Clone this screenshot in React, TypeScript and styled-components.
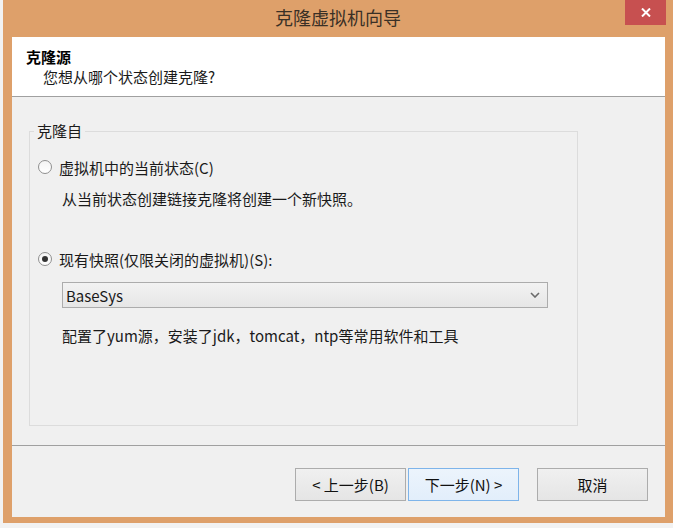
import styled, { createGlobalStyle } from 'styled-components'

const GlobalStyle = createGlobalStyle`
  html, body {
    margin: 0;
    height: 100%;
    overflow: hidden;
    background: #f2f2f2;
    font-family: "Noto Sans CJK SC", "Noto Sans", sans-serif;
    color: #1a1a1a;
  }
`

const Page = styled.div`
  padding-left: 3px;
`

const Window = styled.div`
  width: 670px;
  height: 523px;
  box-sizing: border-box;
  background: #dea06a;
  display: flex;
  flex-direction: column;
  padding-bottom: 6px;
`

const TitleBar = styled.div`
  height: 37px;
  flex-shrink: 0;
  display: grid;
  grid-template-columns: 1fr auto 1fr;
  padding: 0 7px;
`

const Title = styled.div`
  grid-column: 2;
  font-size: 18px;
  line-height: 34px;
  color: #3a3026;
`

const CloseButton = styled.div`
  grid-column: 3;
  justify-self: end;
  width: 41px;
  height: 25px;
  background: #c75050;
  display: flex;
  align-items: center;
  justify-content: center;
`

const Client = styled.div`
  flex: 1;
  margin: 0 8px 0 9px;
  background: #f0f0f0;
  display: flex;
  flex-direction: column;
`

const Header = styled.div`
  height: 60px;
  box-sizing: border-box;
  background: #ffffff;
  border-bottom: 1px solid #a0a0a0;
  padding: 10px 0 0 14px;
`

const HeaderTitle = styled.div`
  font-size: 15px;
  line-height: 20px;
  font-weight: bold;
  color: #000;
`

const HeaderSub = styled.div`
  font-size: 15px;
  line-height: 20px;
  margin-left: 17px;
  color: #1a1a1a;
`

const Body = styled.div`
  flex: 1;
  padding: 24px 0 0 17px;
`

const Group = styled.fieldset`
  margin: 0;
  width: 549px;
  height: 305px;
  box-sizing: border-box;
  border: 1px solid #dcdcdc;
  padding: 0 0 0 8px;
  display: flex;
  flex-direction: column;
  align-items: flex-start;
`

const Legend = styled.legend`
  font-size: 15px;
  line-height: 20px;
  padding: 0 3px;
  margin-left: -4px;
`

const Option = styled.label<{ $top: number }>`
  display: flex;
  align-items: center;
  gap: 7px;
  height: 20px;
  margin-top: ${(p) => p.$top}px;
  font-size: 15px;
`

const Radio = styled.input.attrs({ type: 'radio' })`
  appearance: none;
  margin: 0;
  width: 14px;
  height: 14px;
  border-radius: 50%;
  border: 1px solid #8f8f8f;
  background: linear-gradient(#f4f4f4, #ffffff);
  display: grid;
  place-items: center;
  box-sizing: border-box;

  &:checked::after {
    content: '';
    width: 6px;
    height: 6px;
    border-radius: 50%;
    background: #333;
  }
`

const Note = styled.div<{ $top: number }>`
  margin: ${(p) => p.$top}px 0 0 24px;
  font-size: 15px;
  line-height: 20px;
`

const Select = styled.div`
  margin: 13px 0 0 24px;
  width: 486px;
  height: 26px;
  box-sizing: border-box;
  border: 1px solid #acacac;
  background: linear-gradient(#f2f2f2, #e6e6e6);
  display: flex;
  align-items: center;
  justify-content: space-between;
  padding: 0 7px 0 3px;
  font-size: 15px;
`

const Footer = styled.div`
  height: 72px;
  box-sizing: border-box;
  border-top: 1px solid #a0a0a0;
  display: flex;
  justify-content: flex-end;
  align-items: flex-start;
  padding: 22px 17px 0 0;
`

const Button = styled.div<{ $focused?: boolean; $gap: number }>`
  width: 111px;
  height: 33px;
  box-sizing: border-box;
  margin-left: ${(p) => p.$gap}px;
  border: 1px solid ${(p) => (p.$focused ? '#7eb4ea' : '#acacac')};
  background: ${(p) =>
    p.$focused ? 'linear-gradient(#ecf4fc, #e2eefb)' : 'linear-gradient(#f0f0f0, #e5e5e5)'};
  display: flex;
  align-items: center;
  justify-content: center;
  font-size: 15px;
  color: #111;
`

function App() {
  return (
    <Page>
      <GlobalStyle />
      <Window>
        <TitleBar>
          <Title>克隆虚拟机向导</Title>
          <CloseButton>
            <svg width="10" height="9" viewBox="0 0 10 9">
              <path d="M1 0.5 L9 8.5 M9 0.5 L1 8.5" stroke="#fff" strokeWidth="2" />
            </svg>
          </CloseButton>
        </TitleBar>
        <Client>
          <Header>
            <HeaderTitle>克隆源</HeaderTitle>
            <HeaderSub>您想从哪个状态创建克隆?</HeaderSub>
          </Header>
          <Body>
            <Group>
              <Legend>克隆自</Legend>
              <Option $top={16}>
                <Radio name="src" readOnly />
                虚拟机中的当前状态(C)
              </Option>
              <Note $top={12}>从当前状态创建链接克隆将创建一个新快照。</Note>
              <Option $top={40}>
                <Radio name="src" defaultChecked />
                现有快照(仅限关闭的虚拟机)(S):
              </Option>
              <Select>
                <span>BaseSys</span>
                <svg width="10" height="6" viewBox="0 0 10 6">
                  <path d="M1 1 L5 5 L9 1" fill="none" stroke="#6a6a6a" strokeWidth="1.6" />
                </svg>
              </Select>
              <Note $top={18}>配置了yum源，安装了jdk，tomcat，ntp等常用软件和工具</Note>
            </Group>
          </Body>
          <Footer>
            <Button $gap={0}>&lt; 上一步(B)</Button>
            <Button $gap={2} $focused>下一步(N) &gt;</Button>
            <Button $gap={18}>取消</Button>
          </Footer>
        </Client>
      </Window>
    </Page>
  )
}

export default App
